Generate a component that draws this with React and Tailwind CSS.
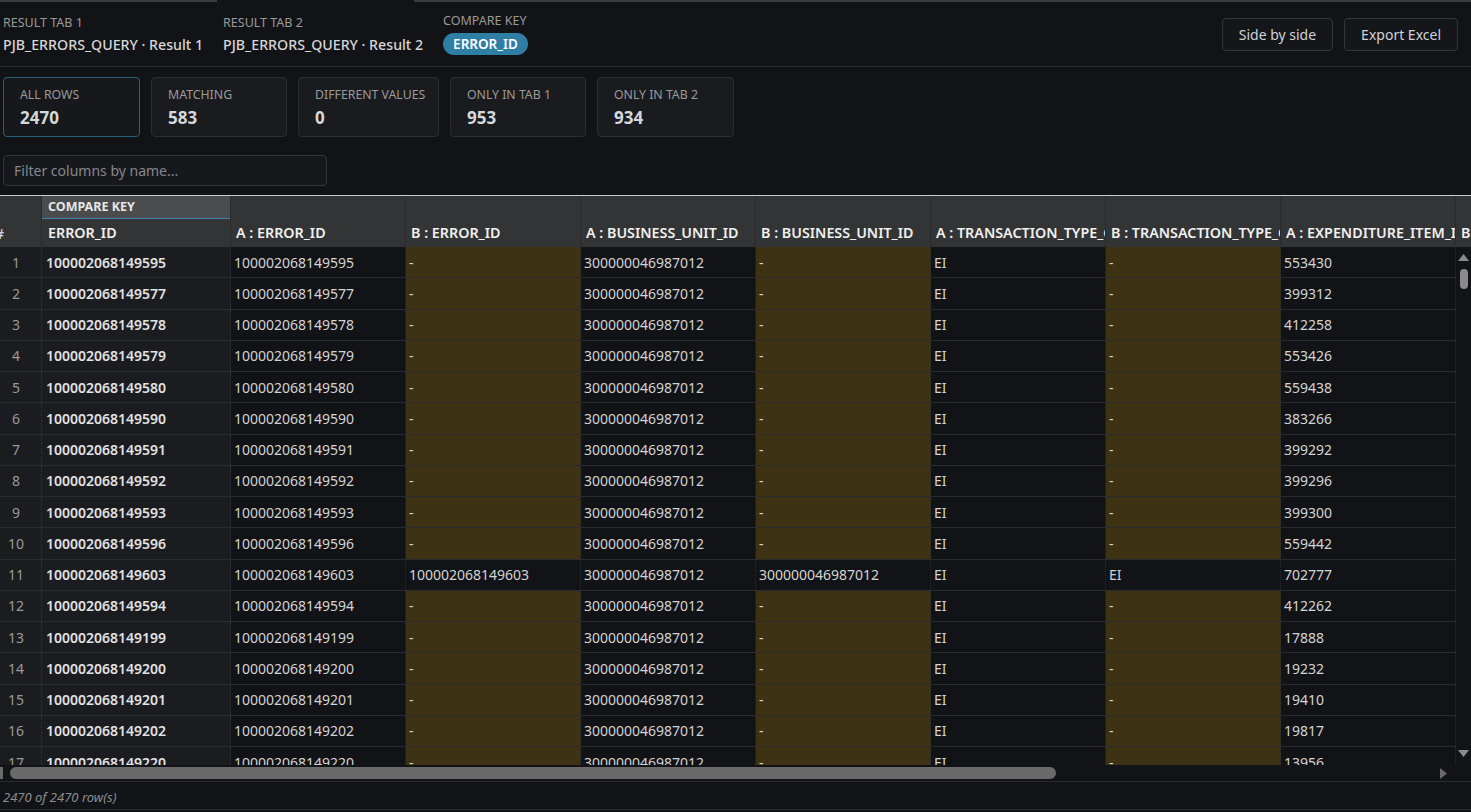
import React from "react";

const rows = [
  ["100002068149595", "553430"],
  ["100002068149577", "399312"],
  ["100002068149578", "412258"],
  ["100002068149579", "553426"],
  ["100002068149580", "559438"],
  ["100002068149590", "383266"],
  ["100002068149591", "399292"],
  ["100002068149592", "399296"],
  ["100002068149593", "399300"],
  ["100002068149596", "559442"],
  ["100002068149603", "702777", true],
  ["100002068149594", "412262"],
  ["100002068149199", "17888"],
  ["100002068149200", "19232"],
  ["100002068149201", "19410"],
  ["100002068149202", "19817"],
  ["100002068149220", "13956"],
];

const columns = [
  "A : ERROR_ID",
  "B : ERROR_ID",
  "A : BUSINESS_UNIT_ID",
  "B : BUSINESS_UNIT_ID",
  "A : TRANSACTION_TYPE_CODE",
  "B : TRANSACTION_TYPE_CODE",
  "A : EXPENDITURE_ITEM_ID",
  "B : EXPENDITURE_ITEM_ID",
];

const stats = [
  { label: "ALL ROWS", value: "2470", active: true, w: "w-[137px]" },
  { label: "MATCHING", value: "583", w: "w-[136px]" },
  { label: "DIFFERENT VALUES", value: "0", w: "w-[141px]" },
  { label: "ONLY IN TAB 1", value: "953", w: "w-[136px]" },
  { label: "ONLY IN TAB 2", value: "934", w: "w-[137px]" },
];

const HeaderGroup = ({ label, value }) => (
  <div className="flex flex-col">
    <span className="text-[12.5px] leading-4 text-[#9a9a9a]">{label}</span>
    <span className="mt-1 text-[14.2px] leading-5 font-medium text-[#d6d6d6] whitespace-nowrap">{value}</span>
  </div>
);

const Cell = ({ children, olive }) => (
  <div
    className={`w-[175px] shrink-0 h-full flex items-center pl-[3px] overflow-hidden whitespace-nowrap border-r border-dotted border-[#2a2b2e] ${
      olive ? "bg-[#3d3314]" : ""
    }`}
  >
    {children}
  </div>
);

export default function App() {
  return (
    <div
      className="h-screen flex flex-col bg-[#121316] text-[#d4d4d4] overflow-hidden"
      style={{ fontFamily: '"Noto Sans", "Open Sans", sans-serif' }}
    >
      {/* top tab strip */}
      <div className="h-[2px] flex shrink-0">
        <div className="w-[217px] bg-[#3a3b3e]" />
        <div className="w-[197px] bg-[#121316]" />
        <div className="flex-1 bg-[#3a3b3e]" />
      </div>

      {/* header */}
      <div className="h-[65px] shrink-0 flex items-center justify-between pl-[3px] pr-[13px] border-b border-[#2c2d30]">
        <div className="flex items-end gap-5">
          <HeaderGroup label="RESULT TAB 1" value="PJB_ERRORS_QUERY · Result 1" />
          <HeaderGroup label="RESULT TAB 2" value="PJB_ERRORS_QUERY · Result 2" />
          <div className="flex flex-col items-start">
            <span className="text-[12.5px] leading-4 text-[#9a9a9a]">COMPARE KEY</span>
            <span className="mt-1 h-[22px] px-[10px] rounded-full bg-[#2f7ea6] text-white text-[13.5px] font-semibold flex items-center">
              ERROR_ID
            </span>
          </div>
        </div>
        <div className="flex gap-[11px]">
          <button className="h-[33px] px-4 text-[14px] text-[#cfd3d8] bg-[#15161a] border border-[#34353a] rounded-[4px]">
            Side by side
          </button>
          <button className="h-[33px] px-4 text-[14px] text-[#cfd3d8] bg-[#15161a] border border-[#34353a] rounded-[4px]">
            Export Excel
          </button>
        </div>
      </div>

      {/* stats + filter */}
      <div className="shrink-0 px-[3px] pt-[10px] pb-[9px]">
        <div className="flex gap-[11px]">
          {stats.map((s) => (
            <div
              key={s.label}
              className={`h-[60px] ${s.w} px-4 pt-[9px] rounded-[4px] border ${
                s.active ? "border-[#2c5f7c] bg-[#16181b]" : "border-[#2c2d31] bg-[#1a1b1e]"
              }`}
            >
              <div className="text-[12.3px] leading-4 text-[#9a9a9a] whitespace-nowrap">{s.label}</div>
              <div className="text-[17px] leading-6 font-bold text-[#d4d8dc] mt-[3px]">{s.value}</div>
            </div>
          ))}
        </div>
        <input
          placeholder="Filter columns by name..."
          className="mt-[18px] w-[324px] h-[31px] px-[10px] text-[14px] bg-[#17181b] border border-[#34353a] rounded-[4px] text-[#d4d4d4] placeholder:text-[#85878b] outline-none"
        />
      </div>

      {/* grid */}
      <div className="flex-1 min-h-0 flex flex-col border-t border-[#c9c9c9]">
        {/* header rows */}
        <div className="shrink-0 h-[51px] bg-[#333435] flex overflow-hidden">
          <div className="w-[42px] shrink-0 flex flex-col border-r border-[#2a2a2c]">
            <div className="h-[23px]" />
            <div className="flex-1 flex items-center overflow-hidden">
              <span className="-ml-[5px] text-[14px] font-semibold text-[#d0d0d0]">#</span>
            </div>
          </div>
          <div className="w-[189px] shrink-0 flex flex-col border-r border-[#2a2a2c]">
            <div className="h-[23px] bg-[#4a4b4c] border-b border-[#3d86ad] flex items-center px-[6px] text-[12.5px] font-bold text-[#e6e6e6]">
              COMPARE KEY
            </div>
            <div className="flex-1 flex items-center px-[6px] text-[14.3px] font-semibold text-[#f0f0f0]">ERROR_ID</div>
          </div>
          {columns.map((c) => (
            <div key={c} className="w-[175px] shrink-0 flex flex-col border-r border-[#2a2a2c]">
              <div className="h-[23px]" />
              <div className="flex-1 flex items-center px-[5px] text-[14.3px] font-semibold text-[#f0f0f0] whitespace-nowrap overflow-hidden">
                {c}
              </div>
            </div>
          ))}
        </div>

        {/* body */}
        <div className="flex-1 min-h-0 flex">
          <div className="flex-1 min-w-0 overflow-hidden">
            {rows.map(([id, exp, match], i) => (
              <div key={id} className="h-[31.25px] flex border-b border-[#2a2b2e] text-[14px]">
                <div className="w-[42px] shrink-0 bg-[#1b1c1f] border-r border-dotted border-[#34353a] flex items-center">
                  <span className="w-[32px] text-center text-[#9a9a9a]">{i + 1}</span>
                </div>
                <div className="w-[189px] shrink-0 bg-[#1b1c1f] border-r border-dotted border-[#34353a] flex items-center px-1 font-semibold text-[#e2e2e2]">
                  {id}
                </div>
                <Cell>{id}</Cell>
                <Cell olive={!match}>{match ? id : "-"}</Cell>
                <Cell>300000046987012</Cell>
                <Cell olive={!match}>{match ? "300000046987012" : "-"}</Cell>
                <Cell>EI</Cell>
                <Cell olive={!match}>{match ? "EI" : "-"}</Cell>
                <Cell>{exp}</Cell>
                <Cell olive={!match} />
              </div>
            ))}
          </div>
          {/* vertical scrollbar */}
          <div className="w-[15px] shrink-0 flex flex-col items-center pt-[7px] pb-[8px]">
            <svg width="11" height="7" viewBox="0 0 11 7">
              <path d="M5.5 0 L11 7 L0 7 Z" fill="#8a8a8a" />
            </svg>
            <div className="mt-[8px] w-[8px] h-[20px] rounded-full bg-[#8a8a8a]" />
            <div className="flex-1" />
            <svg width="11" height="7" viewBox="0 0 11 7">
              <path d="M0 0 L11 0 L5.5 7 Z" fill="#8a8a8a" />
            </svg>
          </div>
        </div>

        {/* horizontal scrollbar */}
        <div className="shrink-0 h-[17px] flex items-center border-b border-[#2a2b2e]">
          <div className="w-[3px] h-[12px] bg-[#6a6a6a]" />
          <div className="ml-[7px] w-[1046px] h-[12px] rounded-full bg-[#6a6a6a]" />
          <div className="flex-1" />
          <svg width="7" height="11" viewBox="0 0 7 11" className="mr-[24px]">
            <path d="M0 0 L7 5.5 L0 11 Z" fill="#6a6a6a" />
          </svg>
        </div>
      </div>

      {/* footer */}
      <div className="shrink-0 h-[28px] flex items-center pt-[5px] px-[3px] border-b border-[#2a2b2e] text-[13px] italic text-[#8c8c8c]">
        2470 of 2470 row(s)
      </div>
      <div className="h-[2px] shrink-0" />
    </div>
  );
}
